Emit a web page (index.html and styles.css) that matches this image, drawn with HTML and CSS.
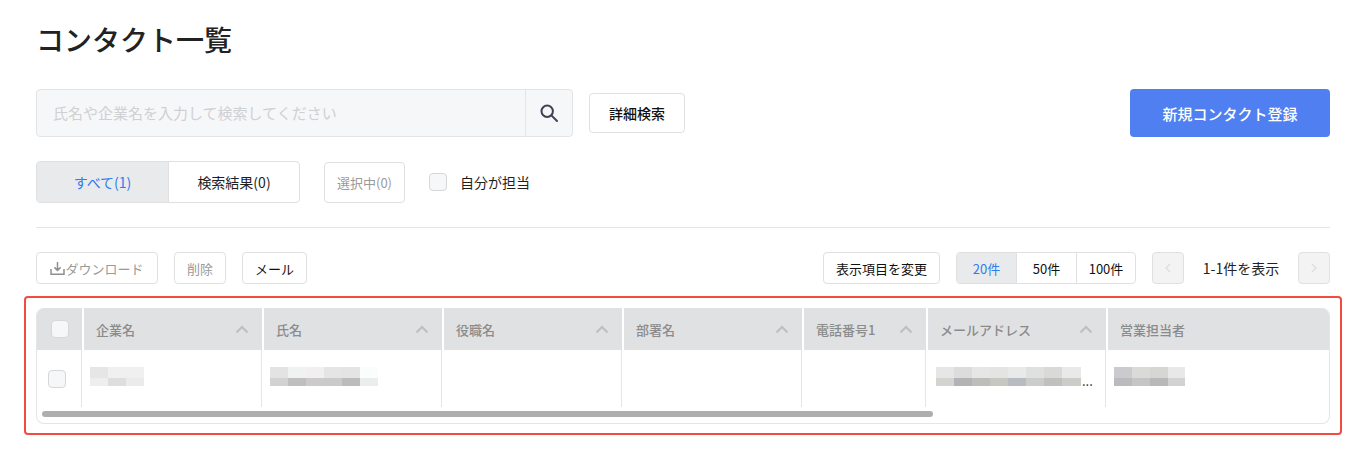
FILE: index.html
```html
<!DOCTYPE html>
<html lang="ja">
<head>
<meta charset="utf-8">
<title>コンタクト一覧</title>
<link rel="stylesheet" href="styles.css">
</head>
<body>
<main class="page">
  <h1 class="title">コンタクト一覧</h1>
  <section class="search-row">
    <div class="search">
      <div class="search-input">氏名や企業名を入力して検索してください</div>
      <div class="search-btn">
        <svg width="20" height="20" viewBox="0 0 20 20" fill="none" stroke="#3d4354" stroke-width="2"><circle cx="8.2" cy="8.2" r="5.7"/><path d="M12.4 12.4 18 18" stroke-linecap="round"/></svg>
      </div>
    </div>
    <button class="btn detail">詳細検索</button>
    <button class="primary">新規コンタクト登録</button>
  </section>
  <section class="filter-row">
    <div class="seg tabs">
      <span class="seg-item active tab">すべて(1)</span>
      <span class="seg-item tab">検索結果(0)</span>
    </div>
    <button class="btn selected muted">選択中(0)</button>
    <label class="mine"><span class="check"></span>自分が担当</label>
  </section>
  <hr class="rule">
  <section class="toolbar">
    <button class="btn small muted download">
      <svg width="15" height="15" viewBox="0 0 15 15" fill="none" stroke="#8f8f8f" stroke-width="1.5"><path d="M7.5 1v8.2M4.4 6.4l3.1 3 3.1-3M1 8v5.2h13V8"/></svg>ダウンロード
    </button>
    <button class="btn small muted del">削除</button>
    <button class="btn small mail">メール</button>
    <span class="spacer"></span>
    <button class="btn small columns">表示項目を変更</button>
    <div class="seg pages">
      <span class="seg-item active p20">20件</span>
      <span class="seg-item p50">50件</span>
      <span class="seg-item p100">100件</span>
    </div>
    <span class="nav"><svg width="8" height="10" viewBox="0 0 8 10" fill="none" stroke="#dcdcdc" stroke-width="1.2"><path d="M6 1 2 5l4 4"/></svg></span>
    <span class="count">1-1件を表示</span>
    <span class="nav"><svg width="8" height="10" viewBox="0 0 8 10" fill="none" stroke="#dcdcdc" stroke-width="1.2"><path d="m2 1 4 4-4 4"/></svg></span>
  </section>
  <section class="frame">
    <div class="table">
      <div class="grid head">
        <div class="hcell first"><span class="check"></span></div>
        <div class="hcell">企業名<svg class="chev" width="14" height="9" viewBox="0 0 14 9" fill="none" stroke="#bdbebf" stroke-width="2"><path d="m1.5 7.5 5.500-5.500 5.500 5.500"/></svg></div>
        <div class="hcell">氏名<svg class="chev" width="14" height="9" viewBox="0 0 14 9" fill="none" stroke="#bdbebf" stroke-width="2"><path d="m1.5 7.5 5.500-5.500 5.500 5.500"/></svg></div>
        <div class="hcell">役職名<svg class="chev" width="14" height="9" viewBox="0 0 14 9" fill="none" stroke="#bdbebf" stroke-width="2"><path d="m1.5 7.5 5.500-5.500 5.500 5.500"/></svg></div>
        <div class="hcell">部署名<svg class="chev" width="14" height="9" viewBox="0 0 14 9" fill="none" stroke="#bdbebf" stroke-width="2"><path d="m1.5 7.5 5.500-5.500 5.500 5.500"/></svg></div>
        <div class="hcell">電話番号1<svg class="chev" width="14" height="9" viewBox="0 0 14 9" fill="none" stroke="#bdbebf" stroke-width="2"><path d="m1.5 7.5 5.500-5.500 5.500 5.500"/></svg></div>
        <div class="hcell">メールアドレス<svg class="chev" width="14" height="9" viewBox="0 0 14 9" fill="none" stroke="#bdbebf" stroke-width="2"><path d="m1.5 7.500 5.500-5.500 5.500 5.500"/></svg></div>
        <div class="hcell">営業担当者</div>
      </div>
      <div class="grid body">
        <div class="cell first"><span class="check"></span></div>
        <div class="cell">
          <svg class="mosaic" width="54" height="19" shape-rendering="crispEdges"><rect width="18" height="11" fill="#e6e6e6"/><rect x="18" width="18" height="11" fill="#f0f0f0"/><rect x="36" width="18" height="11" fill="#f0f0f0"/><rect y="11" width="18" height="8" fill="#eeeeee"/><rect x="18" y="11" width="18" height="8" fill="#dedede"/><rect x="36" y="11" width="18" height="8" fill="#ebebeb"/></svg>
        </div>
        <div class="cell">
          <svg class="mosaic" width="108" height="19" shape-rendering="crispEdges"><rect width="18" height="11" fill="#e3e3e3"/><rect x="18" width="18" height="11" fill="#f0f1f1"/><rect x="36" width="18" height="11" fill="#f1efef"/><rect x="54" width="18" height="11" fill="#e5e5e5"/><rect x="72" width="18" height="11" fill="#e4e4e4"/><rect x="90" width="18" height="11" fill="#fbfcfc"/><rect y="11" width="18" height="8" fill="#d2d2d2"/><rect x="18" y="11" width="18" height="8" fill="#bfbfbf"/><rect x="36" y="11" width="18" height="8" fill="#cbcbcb"/><rect x="54" y="11" width="18" height="8" fill="#cacaca"/><rect x="72" y="11" width="18" height="8" fill="#bcbcbc"/><rect x="90" y="11" width="18" height="8" fill="#eceeee"/></svg>
        </div>
        <div class="cell"></div>
        <div class="cell"></div>
        <div class="cell"></div>
        <div class="cell mail-cell">
          <svg class="mosaic" width="145" height="19" shape-rendering="crispEdges"><rect width="18" height="11" fill="#e6e6e6"/><rect x="18" width="18" height="11" fill="#dcdcdc"/><rect x="36" width="18" height="11" fill="#e6e6e6"/><rect x="54" width="18" height="11" fill="#e4e5e3"/><rect x="72" width="18" height="11" fill="#e8eaea"/><rect x="90" width="18" height="11" fill="#dfe0e0"/><rect x="108" width="18" height="11" fill="#d9d9d7"/><rect x="126" width="19" height="11" fill="#e9e9e9"/><rect y="11" width="18" height="8" fill="#d3d3cf"/><rect x="18" y="11" width="18" height="8" fill="#b2b3b5"/><rect x="36" y="11" width="18" height="8" fill="#bdbdb9"/><rect x="54" y="11" width="18" height="8" fill="#c6c7c1"/><rect x="72" y="11" width="18" height="8" fill="#b8bcc0"/><rect x="90" y="11" width="18" height="8" fill="#cccccc"/><rect x="108" y="11" width="18" height="8" fill="#c0c0be"/><rect x="126" y="11" width="19" height="8" fill="#cdccc9"/></svg>
          <span class="ellipsis">...</span>
        </div>
        <div class="cell">
          <svg class="mosaic" width="71" height="19" shape-rendering="crispEdges"><rect width="18" height="11" fill="#cbcbcd"/><rect x="18" width="18" height="11" fill="#dadad8"/><rect x="36" width="18" height="11" fill="#d6d6d4"/><rect x="54" width="17" height="11" fill="#e8e8e8"/><rect y="11" width="18" height="8" fill="#bbbabd"/><rect x="18" y="11" width="18" height="8" fill="#c5c5c5"/><rect x="36" y="11" width="18" height="8" fill="#b8b8b8"/><rect x="54" y="11" width="17" height="8" fill="#d2d2d2"/></svg>
        </div>
      </div>
      <div class="track"><div class="thumb"></div></div>
    </div>
  </section>
</main>
</body>
</html>
```

FILE: styles.css
```css
* { box-sizing: border-box; }
html, body { margin: 0; background: #fff; }
body {
  font-family: "Noto Sans CJK JP", "Noto Sans", sans-serif;
  color: #1f1f1f;
  height: 463px;
  overflow: hidden;
}
button { font-family: inherit; cursor: pointer; }
.page { padding: 0 28px 0 24px; width: 1370px; height: 463px; }
.title {
  margin: 0 12px;
  padding-top: 19px;
  height: 89px;
  font-size: 28px;
  line-height: 40px;
  font-weight: 500;
  color: #222;
}
.search-row { display: flex; align-items: center; margin: 0 12px; height: 48px; }
.search {
  display: flex;
  width: 537px;
  height: 48px;
  background: #f6f7f9;
  border: 1px solid #e3e4e6;
  border-radius: 4px;
}
.search-input {
  flex: 1;
  padding-left: 16px;
  font-size: 15px;
  line-height: 46px;
  color: #cfd0d2;
}
.search-btn {
  width: 47px;
  border-left: 1px solid #e3e4e6;
  display: flex;
  align-items: center;
  justify-content: center;
}
.btn {
  background: #fff;
  border: 1px solid #e0e0e0;
  border-radius: 4px;
  font-size: 14px;
  padding: 0;
  color: #111;
}
.detail { margin-left: 16px; width: 96px; height: 40px; font-weight: 500; }
.primary {
  margin-left: auto;
  width: 200px;
  height: 48px;
  background: #4f7ff0;
  color: #fff;
  border: 0;
  border-radius: 4px;
  font-size: 15px;
  font-weight: 500;
}
.filter-row { display: flex; align-items: center; margin: 24px 12px 0; height: 42px; }
.seg {
  display: flex;
  border: 1px solid #e0e0e0;
  border-radius: 4px;
  overflow: hidden;
  background: #fff;
}
.seg-item { display: flex; align-items: center; justify-content: center; }
.seg-item + .seg-item { border-left: 1px solid #e0e0e0; }
.seg-item.active { background: #e9eaec; color: #2f7bf0; }
.tabs { width: 264px; height: 42px; }
.tab { width: 131px; font-size: 14px; }
.tab + .tab { flex: 1; }
.selected { margin-left: 24px; width: 81px; height: 41px; font-size: 13px; }
.muted { color: #9a9a9a; }
.check {
  display: block;
  width: 18px;
  height: 18px;
  background: #f6f7f9;
  border: 1px solid #d6d7d9;
  border-radius: 4px;
}
.mine { display: flex; align-items: center; gap: 13px; margin-left: 24px; font-size: 14px; }
.rule { margin: 24px 12px 0; border: 0; border-top: 1px solid #e5e5e5; }
.toolbar { display: flex; align-items: center; margin: 24px 12px 0; height: 32px; }
.spacer { flex: 1; }
.small { height: 32px; font-size: 13px; }
.download { width: 122px; display: flex; align-items: center; justify-content: center; color: #9a9a9a; }
.del { margin-left: 16px; width: 52px; }
.mail { margin-left: 16px; width: 65px; }
.columns { width: 117px; margin-right: 16px; }
.pages { width: 180px; height: 32px; font-size: 13px; color: #111; margin-right: 16px; }
.p20 { width: 59px; }
.p50 { width: 60px; }
.p100 { flex: 1; }
.nav {
  display: flex;
  align-items: center;
  justify-content: center;
  width: 32px;
  height: 32px;
  background: #f3f3f3;
  border: 1px solid #e0e0e0;
  border-radius: 4px;
}
.count { width: 114px; text-align: center; font-size: 14px; color: #222; }
.frame {
  margin-top: 12px;
  height: 139px;
  border: 2px solid #f44a40;
  border-radius: 4px;
  padding: 10px;
}
.table {
  height: 116px;
  border: 1px solid #e5e5e5;
  border-top: 0;
  border-radius: 8px;
  overflow: hidden;
}
.grid { display: grid; grid-template-columns: 45px 180px 180px 180px 180px 124px 180px 1fr; }
.head { height: 42px; background: #e0e1e3; }
.hcell {
  display: flex;
  align-items: center;
  justify-content: space-between;
  padding: 0 13px 0 12px;
  font-size: 13px;
  font-weight: 500;
  color: #8b8b8b;
  border-left: 2px solid #fff;
}
.hcell:first-child { border-left: 0; }
.first { justify-content: center; padding: 0; display: flex; align-items: center; }
.body { height: 57px; }
.cell {
  position: relative;
  display: flex;
  align-items: flex-start;
  padding: 17px 0 0 8px;
  border-right: 1px solid #e5e5e5;
  margin-left: 0;
  font-size: 13px;
}
.cell:last-child { border-right: 0; }
.cell.first { padding: 0 4px 0 0; align-items: center; }
.mosaic { display: block; }
.mail-cell { padding-left: 10px; }
.ellipsis { line-height: 19px; padding-top: 4px; margin-left: 1px; letter-spacing: 0; }
.track { padding: 4px 0 0 5px; }
.thumb { width: 891px; height: 6px; background: #aeaeae; border-radius: 3px; }
```
